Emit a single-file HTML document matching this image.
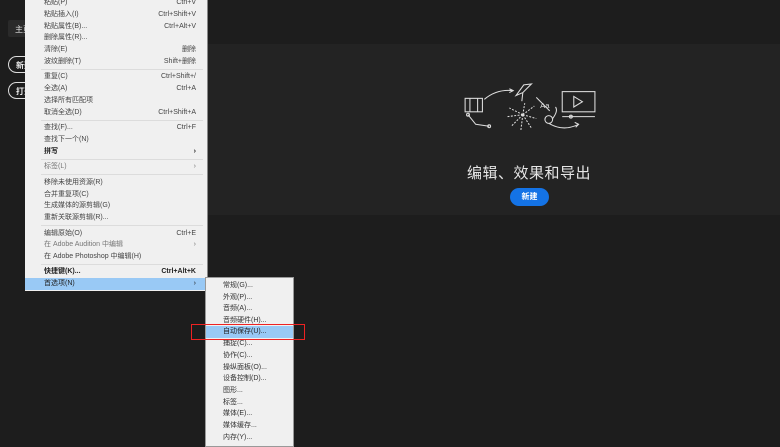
<!DOCTYPE html>
<html><head><meta charset="utf-8"><style>
*{margin:0;padding:0;box-sizing:border-box}
body{width:780px;height:440px;overflow:hidden;background:#1d1d1d;position:relative;font-family:"Liberation Sans","Noto Sans CJK SC",sans-serif}
.panel{position:absolute;left:207px;top:44px;width:573px;height:171px;background:#232323}
.home{position:absolute;left:8px;top:20px;width:30px;height:17px;background:#2a2a2a;border-radius:2px;color:#ddd;font-size:8px;padding:4px 0 0 7px}
.pill{position:absolute;left:8px;width:30px;height:17px;border:1.5px solid #ddd;border-radius:9px;color:#eee;font-size:8px;padding:3px 0 0 7px;font-weight:bold}
.menu{position:absolute;left:25px;top:-3px;width:183px;height:294px;background:#f0f0f0;border-right:1px solid #888;font-size:7px;color:#444}
.it{position:absolute;left:0;width:182px;height:11.7px;line-height:11.7px;padding-left:19px}
.it .k{position:absolute;right:11px;top:0}
.sep{position:absolute;left:16px;right:4px;height:1px;background:#dcdcdc}
.hl{background:#99c9f5;color:#222}
.b{font-weight:bold;color:#222}
.g{color:#777}
.sub{position:absolute;left:205px;top:277px;width:89px;height:170px;background:#f0f0f0;border:1px solid #999;font-size:7px;color:#333}
.sub .it{width:87px;padding-left:17px}
.title{position:absolute;left:429px;width:200px;top:162px;text-align:center;color:#e6e6e6;font-size:15px;letter-spacing:0.5px}
.btn{position:absolute;left:510px;top:188px;width:39px;height:18px;background:#1473e6;border-radius:9px;color:#fff;font-size:8px;font-weight:bold;text-align:center;line-height:18px}
.red{position:absolute;left:191px;top:324px;width:114px;height:16px;border:1px solid #e22}
</style></head><body>
<div class="panel"></div>
<div class="home">主页</div>
<div class="pill" style="top:56px">新建</div>
<div class="pill" style="top:82px">打开</div>
<svg style="position:absolute;left:462px;top:82px" width="137" height="50" viewBox="0 0 140 52" fill="none" stroke="#ddd" stroke-width="1.1">
<rect x="2" y="17" width="18" height="14"/><line x1="7" y1="17" x2="7" y2="31"/><line x1="15" y1="17" x2="15" y2="31"/>
<path d="M22 18 Q35 7 52 9"/><path d="M48 7 L52 9 L48 11"/>
<path d="M5 34 L13 44 L27 46"/><circle cx="5" cy="34" r="1.5"/><circle cx="27" cy="46" r="1.5"/>
<path d="M55 14 L63 3 L71 2 L62 11 Z"/><line x1="62" y1="11" x2="61" y2="20"/>
<g stroke-dasharray="2 1.5"><path d="M62 34 L48 27 M62 34 L46 36 M62 34 L50 46 M62 34 L60 50 M62 34 L71 48 M62 34 L76 38 M62 34 L74 25 M62 34 L64 22"/></g>
<path d="M76 16 L90 30"/><text x="80" y="27" fill="#ddd" stroke="none" font-size="8" font-family="Liberation Sans">Aa</text>
<circle cx="89" cy="39" r="4"/><path d="M93 38 Q99 30 96 26"/><path d="M89 43 Q104 52 120 44"/><path d="M116 42 L120 44 L117 47"/>
<rect x="103" y="10" width="34" height="21"/><path d="M115 15 L124 20.5 L115 26 Z"/><line x1="103" y1="36" x2="137" y2="36"/><circle cx="112" cy="36" r="1.5"/>
</svg>
<div class="title">编辑、效果和导出</div>
<div class="btn">新建</div>
<div class="menu">
<div class="it" style="top:0px">粘贴(P)<span class="k">Ctrl+V</span></div>
<div class="it" style="top:12px">粘贴插入(I)<span class="k">Ctrl+Shift+V</span></div>
<div class="it" style="top:24px">粘贴属性(B)...<span class="k">Ctrl+Alt+V</span></div>
<div class="it" style="top:35px">删除属性(R)...</div>
<div class="it" style="top:47px">清除(E)<span class="k">删除</span></div>
<div class="it" style="top:59px">波纹删除(T)<span class="k">Shift+删除</span></div>
<div class="sep" style="top:72px"></div>
<div class="it" style="top:74px">重复(C)<span class="k">Ctrl+Shift+/</span></div>
<div class="it" style="top:86px">全选(A)<span class="k">Ctrl+A</span></div>
<div class="it" style="top:98px">选择所有匹配项</div>
<div class="it" style="top:110px">取消全选(D)<span class="k">Ctrl+Shift+A</span></div>
<div class="sep" style="top:123px"></div>
<div class="it" style="top:125px">查找(F)...<span class="k">Ctrl+F</span></div>
<div class="it" style="top:137px">查找下一个(N)</div>
<div class="it b" style="top:149px">拼写<span class="k">›</span></div>
<div class="sep" style="top:162px"></div>
<div class="it g" style="top:164px">标签(L)<span class="k">›</span></div>
<div class="sep" style="top:177px"></div>
<div class="it" style="top:180px">移除未使用资源(R)</div>
<div class="it" style="top:192px">合并重复项(C)</div>
<div class="it" style="top:203px">生成媒体的源剪辑(G)</div>
<div class="it" style="top:215px">重新关联源剪辑(R)...</div>
<div class="sep" style="top:228px"></div>
<div class="it" style="top:231px">编辑原始(O)<span class="k">Ctrl+E</span></div>
<div class="it g" style="top:242px">在 Adobe Audition 中编辑<span class="k">›</span></div>
<div class="it" style="top:254px">在 Adobe Photoshop 中编辑(H)</div>
<div class="sep" style="top:267px"></div>
<div class="it b" style="top:269px">快捷键(K)...<span class="k">Ctrl+Alt+K</span></div>
<div class="it hl" style="top:281px">首选项(N)<span class="k">›</span></div>
</div>
<div class="sub">
<div class="it" style="top:2px">常规(G)...</div>
<div class="it" style="top:14px">外观(P)...</div>
<div class="it" style="top:25px">音频(A)...</div>
<div class="it" style="top:37px">音频硬件(H)...</div>
<div class="it hl" style="top:48px">自动保存(U)...</div>
<div class="it" style="top:60px">捕捉(C)...</div>
<div class="it" style="top:72px">协作(C)...</div>
<div class="it" style="top:84px">操纵面板(O)...</div>
<div class="it" style="top:95px">设备控制(D)...</div>
<div class="it" style="top:107px">图形...</div>
<div class="it" style="top:119px">标签...</div>
<div class="it" style="top:130px">媒体(E)...</div>
<div class="it" style="top:142px">媒体缓存...</div>
<div class="it" style="top:154px">内存(Y)...</div>
</div>
<div class="red"></div>
</body></html>
